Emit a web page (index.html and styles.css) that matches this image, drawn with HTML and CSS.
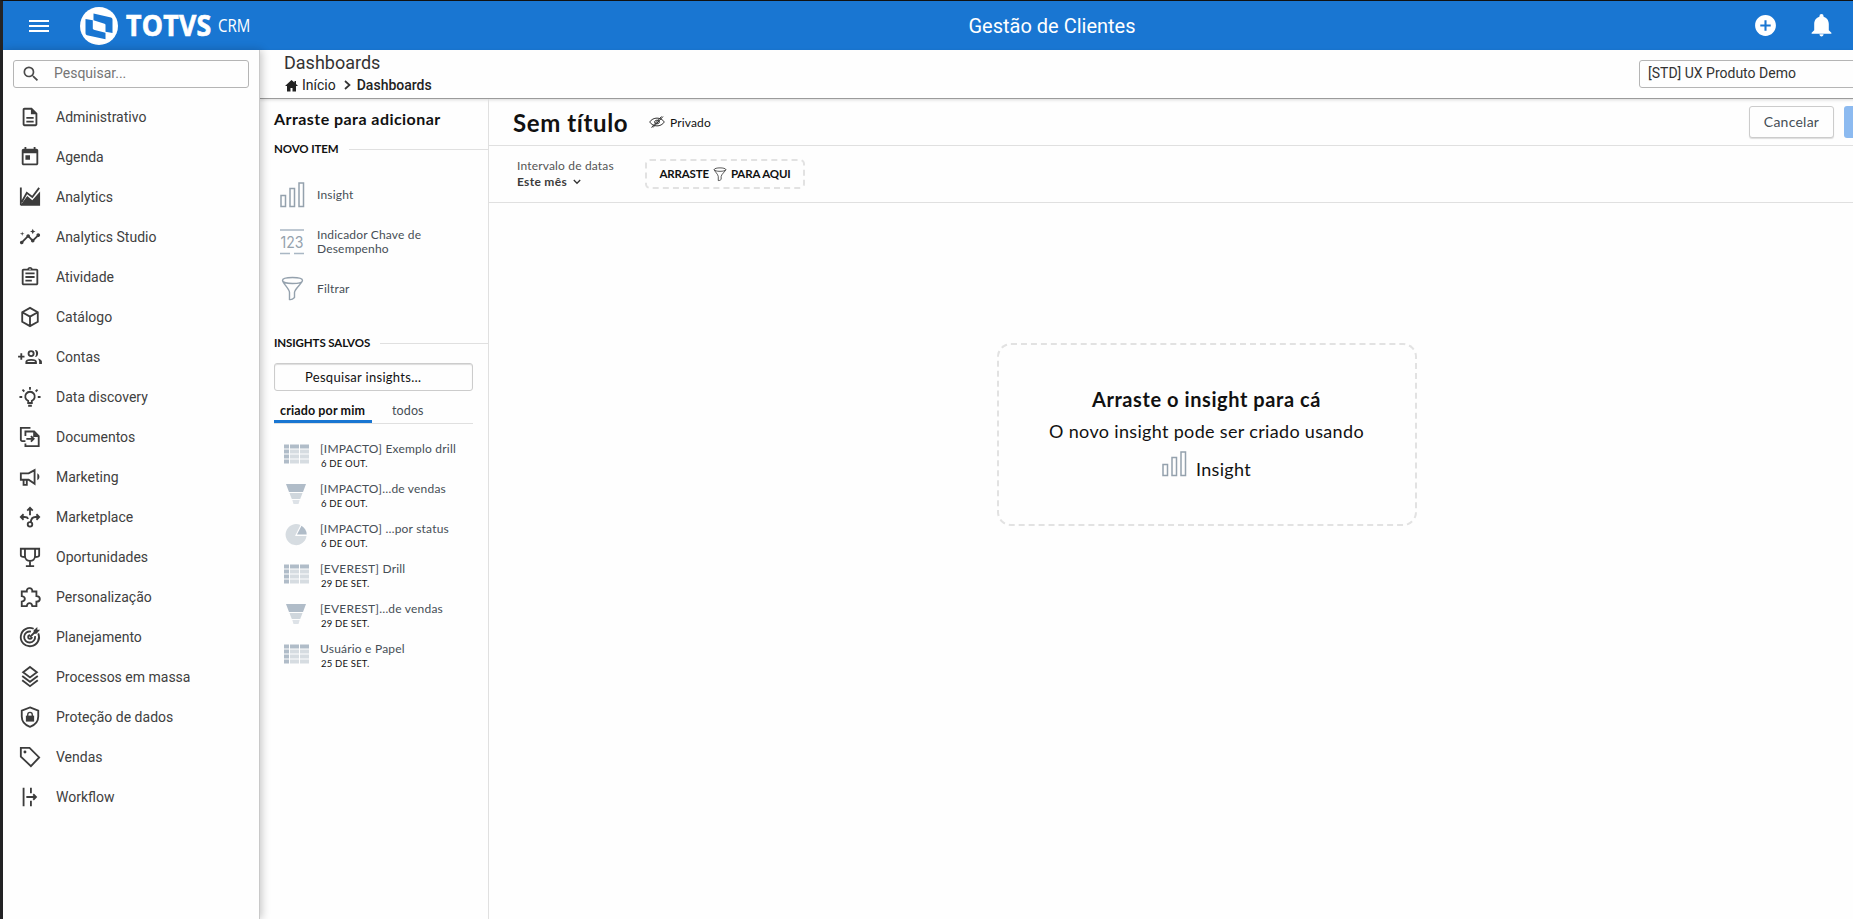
FILE: index.html
```html
<!DOCTYPE html>
<html lang="pt-BR">
<head>
    <meta charset="UTF-8">
    <meta name="viewport" content="width=device-width, initial-scale=1.0">
    <title>TOTVS CRM - Gestão de Clientes</title>
    <link rel="stylesheet" href="styles.css">
</head>
<body>
    <!-- Ícones reutilizados -->
    <svg class="sprite">
        <symbol id="bars" viewBox="0 0 25 26"><path d="M1 13.500h4.500v11H1zM10 6.500h4.500v18H10zM19 1h4.500v23.500H19z" fill="none" stroke="#94a1ad" stroke-width="1.500"/></symbol>
        <symbol id="funnel" viewBox="0 0 24 26"><path d="M2 4.500c0-4 20-4 20 0s-20 4-20 0zM2 4.500c.5 3 7 8.500 7 12V23.500c1.500.5 4-1 5-2V16.500c0-3.500 7.500-9 8-12" fill="none" stroke="currentColor" stroke-width="1.400"/></symbol>
        <symbol id="table" viewBox="0 0 25 19"><path fill="#b0bcc8" d="M0 0h5v4H0zM6 0h9v4H6zM16 0h9v4h-9zM0 5h5v4H0zM0 10h5v4H0zM0 15h5v4H0z"/><path fill="#d6dce1" d="M6 5h9v4H6zM16 5h9v4h-9zM6 10h9v4H6zM16 10h9v4h-9zM6 15h9v4H6zM16 15h9v4h-9z"/></symbol>
        <symbol id="levels" viewBox="0 0 25 20"><path fill="#b0bcc8" d="M2 0h20l-3 8H5z"/><path fill="#d0d7dd" d="M5.500 9h13l-2.300 6H7.800z"/><path fill="#dde2e7" d="M8.300 16h7.400l-1.200 4h-5z"/></symbol>
        <symbol id="pie" viewBox="0 0 25 22"><path fill="#d6dce1" d="M16.500 1.100A10.500 10.500 0 1 0 22.500 12H11z"/><path fill="#b0bcc8" d="M17.500 1.800 13 10.500h9.700a10.500 10.500 0 0 0-5.200-8.700z"/></symbol>
    </svg>

    <div class="app">
        <header class="topbar">
            <div class="brand">
                <svg class="burger" viewBox="0 0 20 12"><path d="M0 1h20M0 6h20M0 11h20" stroke="#fff" stroke-width="1.800"/></svg>
                <svg class="logo" viewBox="0 0 38 38">
                    <circle cx="19" cy="19" r="19" fill="#fff"/>
                    <path d="M13.500 6.500 31 10.500q1.500.4 1.500 2v13.500l-7-1.300V17.500l-1-.8-11-3.500z" fill="#1976d2"/>
                    <path d="M5.500 12l7.300 1.300v8.500l1 1 11.700 3v6.400L7 28.200q-1.500-.4-1.500-2z" fill="#1976d2"/>
                </svg>
                <span class="brand-name">TOTVS</span>
                <span class="brand-product">CRM</span>
            </div>
            <div class="topbar-title">Gestão de Clientes</div>
            <div class="actions">
                <svg viewBox="0 0 24 24"><path d="M12 2C6.480 2 2 6.480 2 12s4.480 10 10 10 10-4.480 10-10S17.520 2 12 2zm5 11h-4v4h-2v-4H7v-2h4V7h2v4h4v2z"/></svg>
                <svg viewBox="0 0 24 24"><path d="M12 22.500c1.100 0 2-.9 2-2h-4c0 1.100.9 2 2 2zm7-6v-6c0-3.300-2-6-5-6.800V3a2 2 0 0 0-4 0v.7C7 4.500 5 7.200 5 10.500v6L2.500 19v1h19v-1z"/></svg>
            </div>
        </header>

        <div class="layout">
            <nav class="sidebar">
                <label class="menu-search">
                    <svg viewBox="0 0 24 24"><path d="M15.500 14h-.79l-.28-.27A6.470 6.470 0 0 0 16 9.500 6.500 6.500 0 1 0 9.500 16c1.610 0 3.090-.59 4.230-1.570l.27.28v.79l5 4.990L20.490 19l-4.990-5zm-6 0C7.010 14 5 11.990 5 9.500S7.010 5 9.500 5 14 7.010 14 9.500 11.990 14 9.500 14z"/></svg>
                    <span>Pesquisar...</span>
                </label>
                <ul class="menu">
                    <li><svg viewBox="0 0 24 24"><path d="M8 16h8v2H8zm0-4h8v2H8zm6-10H6c-1.100 0-2 .9-2 2v16c0 1.100.89 2 1.990 2H18c1.100 0 2-.9 2-2V8l-6-6zm4 18H6V4h7v5h5v11z"/></svg>Administrativo</li>
                    <li><svg viewBox="0 0 24 24"><path d="M19 3h-1V1h-2v2H8V1H6v2H5c-1.100 0-2 .9-2 2v14c0 1.100.9 2 2 2h14c1.100 0 2-.9 2-2V5c0-1.100-.9-2-2-2zm0 16H5V8h14v11zM7 10h5v5H7z"/></svg>Agenda</li>
                    <li><svg viewBox="0 0 24 24"><path class="line" d="M2 1.500V21M3 17.500 8.500 7.500l6 4.500L22 2"/><path d="M2 21.500V20.500l7-9.500 5.500 4.500L23 6v15.500z"/></svg>Analytics</li>
                    <li><svg viewBox="0 0 24 24"><path d="M21 8c-1.450 0-2.260 1.440-1.930 2.510l-3.550 3.560c-.3-.09-.74-.09-1.040 0l-2.550-2.550C12.270 10.450 11.460 9 10 9c-1.450 0-2.270 1.440-1.930 2.520l-4.560 4.550C2.440 15.740 1 16.550 1 18c0 1.100.9 2 2 2 1.450 0 2.260-1.440 1.930-2.510l4.550-4.560c.3.090.74.090 1.040 0l2.550 2.550C12.730 16.550 13.540 18 15 18c1.450 0 2.270-1.440 1.930-2.520l3.560-3.550C21.560 12.260 23 11.450 23 10c0-1.100-.9-2-2-2zM15 9l.94-2.070L18 6l-2.060-.93L15 3l-.92 2.070L12 6l2.080.93zM3.500 11 4 9l2-.5L4 8l-.5-2L3 8l-2 .5L3 9z"/></svg>Analytics Studio</li>
                    <li><svg viewBox="0 0 24 24"><path d="M7 15h7v2H7zm0-4h10v2H7zm0-4h10v2H7zm12-4h-4.180C14.400 1.840 13.300 1 12 1s-2.400.84-2.820 2H5c-1.100 0-2 .9-2 2v14c0 1.100.9 2 2 2h14c1.100 0 2-.9 2-2V5c0-1.100-.9-2-2-2zm-7-.25a.75.75 0 1 1 0 1.500.75.75 0 0 1 0-1.500zM19 19H5V5h14v14z"/></svg>Atividade</li>
                    <li><svg viewBox="0 0 24 24"><path class="line" d="M12 2l8.500 4.800v10.400L12 22l-8.500-4.800V6.800zM3.500 6.800 12 11.600l8.500-4.800M12 11.600V22"/></svg>Catálogo</li>
                    <li><svg viewBox="0 0 24 24"><path class="line" d="M-1 11.500h7M2.500 8v7M8 18.500v-1.200c0-3 10.500-3 10.500 0v1.200zM13.200 5.500a2.800 2.800 0 1 1 0 5.600 2.800 2.800 0 0 1 0-5.600z"/><path d="M17.500 4.500c4.500-.5 4.500 7.600 0 7.600 1.500-2 1.500-5.500 0-7.600zM20.500 13.700c3.300.8 4.500 2 4.500 3.600v2.200h-3v-2.200c0-1.300-.5-2.600-1.500-3.600z"/></svg>Contas</li>
                    <li><svg viewBox="0 0 24 24"><path class="line" d="M10 18.500v-2.200a5.200 5.200 0 1 1 4 0v2.200zM10 21.500h4M12 1v3M0.500 12h3M20.500 12h3M3.800 4l2 2M20.200 4l-2 2"/></svg>Data discovery</li>
                    <li><svg viewBox="0 0 24 24"><path class="line" d="M7 16.500H3.500c-.8 0-1.500-.7-1.500-1.500V2h10.500M7 11V6h9.500l5 5v11H7v-3M8 14h7M13 11l3 3-3 3"/><path d="M15.500 6v6h6z"/></svg>Documentos</li>
                    <li><svg viewBox="0 0 24 24"><path class="line" d="M2 8h8.500L17 4.500v15L10.500 15H2zM5 15.500v5h3.500v-5"/><path d="M20 8c3 1.500 3 6 0 7.500z"/></svg>Marketing</li>
                    <li><svg viewBox="0 0 24 24"><path class="line" d="M12 10V2M9 5l3-3 3 3M2 12h4c2.500 0 3.500.8 4 2M5 9l-3 3 3 3M22 12h-4c-4 0-5 3-5 6M19 9l3 3-3 3M12 17.500a2.500 2.500 0 1 1 0 5 2.500 2.500 0 0 1 0-5z"/></svg>Marketplace</li>
                    <li><svg viewBox="0 0 24 24"><path class="line" d="M6.500 3h11v8c0 7-11 7-11 0zM6.500 3H2v7c0 2 2 2 4.500 2M17.500 3H22v7c0 2-2 2-4.500 2M12 16v5M7.500 22h9"/></svg>Oportunidades</li>
                    <li><svg viewBox="0 0 24 24"><path class="line" d="M3 6h5.500c-.5-5 6.500-5 6 0H19v5c5 .2 5 6 0 6v5h-4.500c-.5-4.500-5.500-4.500-6 0H3v-5c4.500-.5 4.500-5.500 0-6z"/></svg>Personalização</li>
                    <li><svg viewBox="0 0 24 24"><path class="line" d="M21 8a10 10 0 1 1-5-5M17.500 11a6 6 0 1 1-4.500-4.800M14 12a2 2 0 1 1-2-2M12 12l5-5"/><path d="M16 4.500 20 1v3h3l-4 4.500h-3z"/></svg>Planejamento</li>
                    <li><svg viewBox="0 0 24 24"><path class="line" d="M12 1l7.500 5.800L12 12.500 4.500 6.800zM3.500 11l8.500 6.300 8.500-6.300M3.500 15.500 12 22l8.500-6.500"/></svg>Processos em massa</li>
                    <li><svg viewBox="0 0 24 24"><path class="line" d="M12 1.500 21 5v6.500c0 5.500-4 9.500-9 11.200-5-1.700-9-5.700-9-11.200V5z"/><path d="M9.500 11V9.500a2.500 2.500 0 0 1 5 0V11" fill="none" stroke="#3c3c3c" stroke-width="1.500"/><path d="M7.500 10.500h9v6.500h-9z"/></svg>Proteção de dados</li>
                    <li><svg viewBox="0 0 24 24"><path class="line" d="M2 2h9.500L22 12.500 13 22 2 11.500z"/><circle cx="6.500" cy="6.500" r="1.600"/></svg>Vendas</li>
                    <li><svg viewBox="0 0 24 24"><path class="line" d="M5 2v20M13 2v6M13 16v6M8 12h10M15.500 9l3 3-3 3"/></svg>Workflow</li>
                </ul>
            </nav>

            <div class="content">
                <div class="page-head">
                    <div class="page-info">
                        <h1>Dashboards</h1>
                        <div class="breadcrumb">
                            <svg class="home" viewBox="0 0 13 12"><path d="M6.500 0 0 6h2v5.500h3.500V8h2v3.500H11V6h2l-2-2V1H9.500v1.500z"/></svg>
                            <span>Início</span>
                            <svg class="chevron" viewBox="0 0 7 10"><path d="M1 1l4.500 4L1 9" fill="none" stroke="#333" stroke-width="1.700"/></svg>
                            <b>Dashboards</b>
                        </div>
                    </div>
                    <div class="tenant">[STD] UX Produto Demo</div>
                </div>

                <div class="workspace">
                    <aside class="palette">
                        <h2>Arraste para adicionar</h2>
                        <div class="divider"><span>NOVO ITEM</span></div>
                        <div class="new-items">
                            <div class="new-item"><svg><use href="#bars"/></svg><span>Insight</span></div>
                            <div class="new-item">
                                <svg viewBox="0 0 25 26"><path d="M0 1h24M0 24.500h10M14 24.500h10" stroke="#a9b7c4" stroke-width="1.500"/><text class="kpi" x="0.500" y="18.500" textLength="23" lengthAdjust="spacingAndGlyphs">123</text></svg>
                                <span>Indicador Chave de<br>Desempenho</span>
                            </div>
                            <div class="new-item"><svg><use href="#funnel"/></svg><span>Filtrar</span></div>
                        </div>
                        <div class="divider"><span>INSIGHTS SALVOS</span></div>
                        <div class="insight-search">Pesquisar insights…</div>
                        <div class="tabs">
                            <span class="tab active">criado por mim</span>
                            <span class="tab">todos</span>
                        </div>
                        <ul class="saved">
                            <li><svg><use href="#table"/></svg><div><p>[IMPACTO] Exemplo drill</p><small>6 DE OUT.</small></div></li>
                            <li><svg><use href="#levels"/></svg><div><p>[IMPACTO]…de vendas</p><small>6 DE OUT.</small></div></li>
                            <li><svg class="pie"><use href="#pie"/></svg><div><p>[IMPACTO] …por status</p><small>6 DE OUT.</small></div></li>
                            <li><svg><use href="#table"/></svg><div><p>[EVEREST] Drill</p><small>29 DE SET.</small></div></li>
                            <li><svg><use href="#levels"/></svg><div><p>[EVEREST]…de vendas</p><small>29 DE SET.</small></div></li>
                            <li><svg><use href="#table"/></svg><div><p>Usuário e Papel</p><small>25 DE SET.</small></div></li>
                        </ul>
                    </aside>

                    <main class="board">
                        <div class="board-head">
                            <h2>Sem título</h2>
                            <svg class="eye" viewBox="0 0 16 12"><path d="M.7 6C4 .8 12 .8 15.300 6 12 11.200 4 11.200.7 6zM5.500 6a2.600 2.600 0 0 1 5 0 2.600 2.600 0 0 1-5 0zM2.500 11.500l10-11M4 11.500l10-11"/></svg>
                            <span class="private">Privado</span>
                            <div class="buttons">
                                <button class="btn">Cancelar</button>
                                <button class="btn save"></button>
                            </div>
                        </div>
                        <div class="filters">
                            <div class="date">
                                <span>Intervalo de datas</span>
                                <b>Este mês <svg viewBox="0 0 8 6"><path d="M.8 1 4 4.300 7.200 1" fill="none" stroke="#333" stroke-width="1.300"/></svg></b>
                            </div>
                            <div class="filter-drop"><span>ARRASTE</span><svg><use href="#funnel"/></svg><span>PARA AQUI</span></div>
                        </div>
                        <div class="canvas">
                            <div class="drop">
                                <h3>Arraste o insight para cá</h3>
                                <p>O novo insight pode ser criado usando</p>
                                <div class="drop-hint"><svg><use href="#bars"/></svg><span>Insight</span></div>
                            </div>
                        </div>
                    </main>
                </div>
            </div>
        </div>
    </div>
</body>
</html>
```
FILE: styles.css
```css
* { box-sizing: border-box; }
body { margin: 0; height: 919px; overflow: hidden; background: #fefefe; font-family: Roboto, Arial, sans-serif; color: #333; }
h1, h2, h3, p, ul { margin: 0; padding: 0; font-weight: normal; }
ul { list-style: none; }
svg { flex: none; }
.sprite { display: none; }
.app { height: 919px; border-left: 3px solid #242426; border-top: 1px solid #111; }

/* Barra superior */
.topbar { height: 49px; background: #1976d2; color: #fff; display: flex; align-items: center; }
.brand { width: 358px; display: flex; align-items: center; padding-left: 26px; white-space: nowrap; }
.burger { width: 20px; height: 12px; }
.logo { width: 38px; height: 38px; margin-left: 31px; }
.brand-name { font: 700 29px/38px "Open Sans", sans-serif; letter-spacing: 0.3px; margin: -1px 0 0 8px; width: 92px; transform: scaleX(0.92); transform-origin: left; -webkit-text-stroke: 0.7px #fff; }
.brand-product { font: 400 17.500px/20px "Open Sans", sans-serif; margin-top: -2px; transform: scaleX(0.86); transform-origin: left; }
.topbar-title { flex: 1; text-align: center; font-size: 20px; }
.actions { width: 110px; display: flex; gap: 31px; padding-left: 10px; }
.actions svg { width: 25px; height: 25px; fill: #fff; }

/* Menu lateral */
.layout { display: flex; height: 869px; }
.sidebar { width: 257px; flex: none; padding: 10px; background: #fefefe; border-right: 1px solid #c9c9c9; box-shadow: 2px 0 8px rgba(0,0,0,0.22); z-index: 1; }
.menu-search { display: flex; align-items: center; height: 28px; border: 1px solid #b5b5b5; border-radius: 3px; padding-left: 7px; gap: 13px; font-size: 14px; color: #757575; line-height: 25px; }
.menu-search span { margin-top: -1px; }
.menu-search svg { width: 20px; height: 20px; fill: #4a4a4a; }
.menu { padding-top: 9px; }
.menu li { height: 40px; display: flex; align-items: center; padding-left: 6px; gap: 15px; font-size: 14px; color: #404040; }
.menu svg { width: 22px; height: 22px; fill: #3c3c3c; overflow: visible; }
.menu .line { fill: none; stroke: #3c3c3c; stroke-width: 2; }

/* Cabeçalho da página */
.content { flex: none; width: 1664px; display: flex; flex-direction: column; }
.page-head { height: 49px; flex: none; display: flex; justify-content: space-between; border-bottom: 1px solid #9b9b9b; box-shadow: 0 1px 3px rgba(0,0,0,0.15); padding-left: 24px; }
.page-info h1 { font-size: 18px; line-height: 22px; padding-top: 2px; }
.breadcrumb { display: flex; align-items: center; font-size: 14px; line-height: 20px; margin-top: 1px; color: #222; }
.breadcrumb b { font-weight: 500; margin-left: 6px; }
.home { width: 13px; height: 12px; margin: 1px 4px 0 1px; fill: #222; }
.chevron { width: 7px; height: 10px; margin-left: 8px; }
.tenant { width: 285px; height: 28px; margin-top: 10px; border: 1px solid #b5b5b5; border-radius: 3px; padding-left: 8px; font-size: 14px; line-height: 25px; }

/* Painel de itens */
.workspace { flex: 1; display: flex; font-family: Lato, sans-serif; color: #111; }
.palette { width: 229px; flex: none; border-right: 1px solid #e0e0e0; padding: 10px 0 0 14px; }
.palette h2 { font-size: 16px; font-weight: 700; letter-spacing: 0.450px; line-height: 20px; white-space: nowrap; }
.divider { display: flex; align-items: center; gap: 10px; height: 20px; font-size: 11.500px; font-weight: 700; letter-spacing: -0.1px; white-space: nowrap; }
.divider::after { content: ""; flex: 1; height: 1px; background: #e0e0e0; margin-top: 3px; }
.palette h2 + .divider { margin-top: 9px; }
.new-items { padding: 13px 0 20px 6px; }
.new-item { height: 47px; display: flex; align-items: center; gap: 12px; font-size: 12px; letter-spacing: 0.18px; line-height: 14px; color: #464e56; white-space: nowrap; }
.new-item svg { width: 25px; height: 26px; color: #94a1ad; overflow: visible; }
.kpi { font: 15.500px Inter, sans-serif; letter-spacing: 0; fill: #94a1ad; }
.insight-search { width: 199px; height: 28px; margin-top: 11px; border: 1px solid #ccc; border-radius: 3px; box-shadow: inset 0 1px 1px #ddd; padding-left: 30px; font-size: 13px; letter-spacing: 0.3px; line-height: 26px; }
.tabs { display: flex; width: 199px; height: 33px; border-bottom: 1px solid #e0e0e0; font-size: 12.500px; letter-spacing: 0.12px; line-height: 20px; }
.tab { padding: 10px 0 0 20px; color: #464e56; }
.tab.active { width: 98px; padding-left: 6px; border-bottom: 3px solid #1976d2; font-weight: 700; color: #111; white-space: nowrap; }
.saved { padding-top: 17px; }
.saved li { height: 40px; display: flex; padding-left: 10px; gap: 11px; white-space: nowrap; }
.saved svg { width: 25px; height: 20px; margin-top: 3px; }
.saved .pie { height: 22px; margin-top: 3px; }
.saved p { font-size: 12px; letter-spacing: 0.2px; line-height: 15px; color: #464e56; }
.saved small { display: block; font-size: 9.500px; letter-spacing: 0.2px; line-height: 15px; padding-left: 1px; }

/* Dashboard */
.board { flex: 1; min-width: 0; display: flex; flex-direction: column; }
.board-head { height: 47px; display: flex; align-items: center; padding-left: 24px; border-bottom: 1px solid #e0e0e0; }
.board-head h2 { font-size: 24px; font-weight: 700; letter-spacing: 0.6px; width: 136px; flex: none; white-space: nowrap; }
.eye { width: 16px; height: 12px; fill: none; stroke: #333; stroke-width: 1; }
.private { width: 42px; flex: none; margin-left: 5px; font-size: 12px; letter-spacing: 0.15px; }
.buttons { display: flex; flex: none; gap: 10px; margin: -1px 0 0 1037px; }
.btn { width: 85px; height: 32px; flex: none; background: #fefefe; border: 1px solid #ccc; border-radius: 3px; box-shadow: 0 1px 1px #ddd; font: 14px Lato, sans-serif; letter-spacing: 0.25px; color: #464e56; }
.btn.save { background: #8cbaf0; border: 0; box-shadow: none; }
.filters { height: 57px; display: flex; align-items: center; padding-left: 28px; border-bottom: 1px solid #e0e0e0; }
.date { width: 128px; font-size: 12px; letter-spacing: 0.17px; line-height: 16px; color: #555; }
.date span { display: block; white-space: nowrap; }
.date b { color: #3b3b3b; letter-spacing: 0.3px; }
.date svg { width: 8px; height: 6px; margin-left: 3px; vertical-align: 1px; }
.filter-drop { width: 160px; height: 30px; display: flex; align-items: center; justify-content: center; gap: 4px; border: 2px dashed #e2e2e2; border-radius: 5px; font-size: 11.500px; font-weight: 700; letter-spacing: -0.15px; white-space: nowrap; }
.filter-drop span { margin-top: -1px; }
.filter-drop svg { width: 14px; height: 15px; color: #333; }
.canvas { flex: 1; display: flex; justify-content: center; align-items: flex-start; padding-top: 140px; }
.drop { width: 420px; height: 183px; border: 2px dashed #e2e2e2; border-radius: 14px; padding-top: 39px; text-align: center; }
.drop h3 { font-size: 20px; font-weight: 700; letter-spacing: 0.570px; line-height: 31px; }
.drop p { font-size: 18px; letter-spacing: 0.33px; line-height: 33px; }
.drop-hint { display: flex; justify-content: center; gap: 9px; font-size: 18px; letter-spacing: 0.33px; line-height: 24px; }
.drop-hint svg { width: 25px; height: 26px; margin-top: 3px; }
.drop-hint span { padding-top: 9px; }
```
